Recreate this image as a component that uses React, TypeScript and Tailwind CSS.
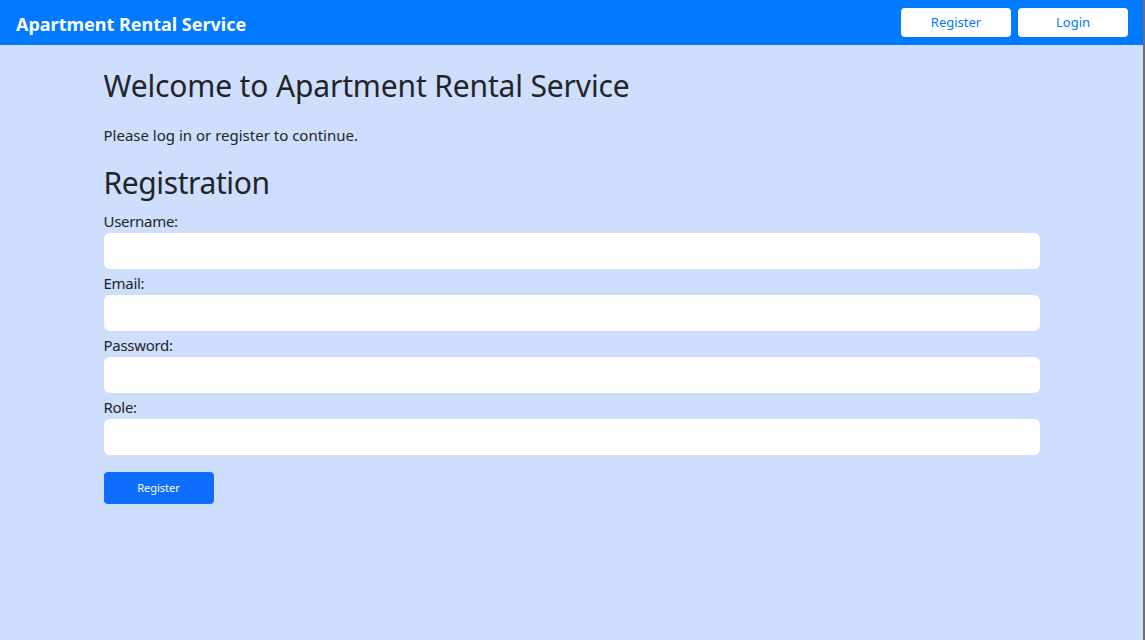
import { useState } from 'react';

const FIELDS = [
  { id: 'username', label: 'Username:', type: 'text' },
  { id: 'email', label: 'Email:', type: 'email' },
  { id: 'password', label: 'Password:', type: 'password' },
  { id: 'role', label: 'Role:', type: 'text' },
];

function NavBar() {
  return (
    <nav className="h-[45px] bg-[#007bff] flex items-center justify-between pl-4 pr-[15px]">
      <span className="text-white font-bold text-[18px] leading-none pt-[2px]">Apartment Rental Service</span>
      <div className="flex items-center gap-[7px]">
        <button className="w-[110px] h-[29px] pt-px bg-white rounded-[4px] text-[#007bff] text-[13px]">Register</button>
        <button className="w-[110px] h-[29px] pt-px bg-white rounded-[4px] text-[#007bff] text-[13px]">Login</button>
      </div>
    </nav>
  );
}

export default function App() {
  const [values, setValues] = useState<Record<string, string>>({});

  return (
    <div
      className="min-h-screen bg-[#cfdefc] border-r-2 border-[#6e6e6e] text-[#212529]"
      style={{ fontFamily: '"Noto Sans", "Open Sans", sans-serif' }}
    >
      <NavBar />
      <main className="w-[936px] mx-auto pt-[21px]">
        <h2 className="text-[30px] leading-[36px] pt-[2px] mb-[19px] tracking-[-0.15px]">Welcome to Apartment Rental Service</h2>
        <p className="text-[15px] leading-6 mb-4">Please log in or register to continue.</p>
        <h2 className="text-[30px] leading-[36px] pt-[2px] mb-2 tracking-[-0.4px]">Registration</h2>
        <form onSubmit={(e) => e.preventDefault()}>
          {FIELDS.map((f) => (
            <div key={f.id} className="mb-[2px]">
              <label htmlFor={f.id} className="block text-[15px] leading-6 tracking-[-0.3px]">{f.label}</label>
              <input
                id={f.id}
                type={f.type}
                value={values[f.id] ?? ''}
                onChange={(e) => setValues({ ...values, [f.id]: e.target.value })}
                className="block w-full h-9 bg-white rounded-[6px] outline-none px-3"
              />
            </div>
          ))}
          <button
            type="submit"
            className="mt-[15px] w-[110px] h-8 bg-[#0d6efd] text-white text-[11px] rounded-[4px]"
          >
            Register
          </button>
        </form>
      </main>
    </div>
  );
}
